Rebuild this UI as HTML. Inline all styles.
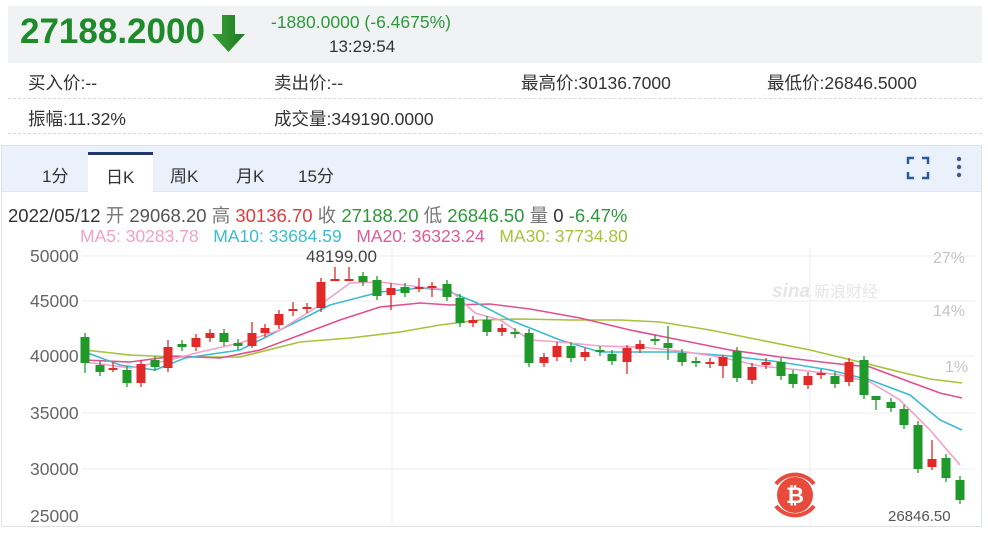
<!DOCTYPE html>
<html><head><meta charset="utf-8"><style>
*{margin:0;padding:0;box-sizing:border-box}
body{width:988px;height:541px;background:#fff;position:relative;overflow:hidden;font-family:"Liberation Sans","Noto Sans CJK SC",sans-serif}
.a{position:absolute;white-space:nowrap}
.top{position:absolute;left:8px;top:6px;width:974px;height:57px;background:#f1f2f4}
.sep{position:absolute;left:8px;width:974px;border-top:1px dashed #d8d8d8}
.lbl{font-size:17.5px;color:#333}
</style></head><body>
<div class="top"></div>
<div class="a" style="left:20px;top:12px;font-size:35px;font-weight:bold;color:#1f8a2a">27188.2000</div>
<svg class="a" style="left:211px;top:14px" width="36" height="40" viewBox="0 0 36 40"><defs><linearGradient id="g" x1="0" x2="1"><stop offset="0" stop-color="#3aa33a"/><stop offset="1" stop-color="#1d7a1d"/></linearGradient></defs><path d="M11 1H24V20H34L17.5 38L1 20H11Z" fill="url(#g)"/></svg>
<div class="a" style="left:271px;top:12px;font-size:17.5px;color:#2c9a3a">-1880.0000 (-6.4675%)</div>
<div class="a" style="left:329px;top:37px;font-size:17px;color:#333">13:29:54</div>
<div class="a lbl" style="left:28px;top:70px">买入价:--</div>
<div class="a lbl" style="left:274px;top:70px">卖出价:--</div>
<div class="a lbl" style="left:521px;top:70px">最高价:30136.7000</div>
<div class="a lbl" style="left:767px;top:70px">最低价:26846.5000</div>
<div class="sep" style="top:98px"></div>
<div class="a lbl" style="left:28px;top:106px">振幅:11.32%</div>
<div class="a lbl" style="left:274px;top:106px">成交量:349190.0000</div>
<div class="sep" style="top:133px"></div>
<div class="a" style="left:1px;top:145px;width:981px;height:382px;border:1px solid #dde3ea"></div>
<div class="a" style="left:2px;top:146px;width:979px;height:46px;background:#eaf1fa;border-bottom:1px solid #e0e6ee"></div>
<div class="a" style="left:88px;top:152px;width:65px;height:41px;background:#fff;border-top:3px solid #223a6a"></div>
<div class="a" style="left:42px;top:162px;font-size:17px;color:#333">1分</div>
<div class="a" style="left:106px;top:163px;font-size:17px;color:#333">日K</div>
<div class="a" style="left:170px;top:162px;font-size:17px;color:#333">周K</div>
<div class="a" style="left:236px;top:162px;font-size:17px;color:#333">月K</div>
<div class="a" style="left:298px;top:162px;font-size:17px;color:#333">15分</div>
<svg class="a" style="left:905px;top:155px" width="60" height="26"><g stroke="#2b5c9a" stroke-width="2.5" fill="none"><path d="M3 9V3H9M17 3H23V9M3 17V23H9M17 23H23V17"/></g><circle cx="54" cy="4" r="2.2" fill="#3a5a8a"/><circle cx="54" cy="12" r="2.2" fill="#3a5a8a"/><circle cx="54" cy="20" r="2.2" fill="#3a5a8a"/></svg>
<div class="a" style="left:8px;top:202px;font-size:18.5px;color:#333">2022/05/12 <span style="color:#777">开</span> <span style="color:#555">29068.20</span> <span style="color:#777">高</span> <span style="color:#e03c3c">30136.70</span> <span style="color:#777">收</span> <span style="color:#2c9a3a">27188.20</span> <span style="color:#777">低</span> <span style="color:#2c9a3a">26846.50</span> <span style="color:#777">量</span> 0 <span style="color:#2c9a3a">-6.47%</span></div>
<div class="a" style="left:80px;top:226px;font-size:17.5px"><span style="color:#f2a0c8">MA5: 30283.78</span>&nbsp;&nbsp;&nbsp;<span style="color:#3bbcd0">MA10: 33684.59</span>&nbsp;&nbsp;&nbsp;<span style="color:#e05a9a">MA20: 36323.24</span>&nbsp;&nbsp;&nbsp;<span style="color:#a8c23a">MA30: 37734.80</span></div>
<svg class="a" style="left:0;top:0" width="988" height="541">
<g stroke="#eceef0" stroke-width="1"><path d="M82 256H975M82 301H975M82 356H975M82 413H975M82 469H975M392 248V525M810 248V525"/></g>
<g font-size="17.5" fill="#666" font-family="Liberation Sans,sans-serif"><text x="30" y="262">50000</text><text x="30" y="307">45000</text><text x="30" y="362">40000</text><text x="30" y="419">35000</text><text x="30" y="475">30000</text><text x="30" y="522">25000</text></g>
<g font-size="16" fill="#c4c4c4" font-family="Liberation Sans,sans-serif"><text x="933" y="263">27%</text><text x="933" y="316">14%</text><text x="945" y="372">1%</text></g>
<text x="306" y="262" font-size="17" fill="#444" font-family="Liberation Sans,sans-serif">48199.00</text>
<text x="772" y="297" font-size="19" font-style="italic" font-weight="bold" fill="#e6e6e6" font-family="Liberation Sans,sans-serif">sina</text><text x="814" y="297" font-size="16" fill="#e6e6e6" font-family="Noto Sans CJK SC,sans-serif">新浪财经</text>
<g fill="none" stroke-width="1.6">
<polyline stroke="#a8c23a" points="85,350 130,355 175,357 240,357 300,342 350,338 400,332 440,325 480,320 520,319 570,320 620,320 660,322 710,330 760,340 810,350 860,362 900,372 930,379 962,383"/>
<polyline stroke="#e0508f" points="85,360 130,362 175,356 220,358 260,350 300,335 340,320 380,307 420,303 450,305 490,304 530,309 580,318 630,330 680,340 730,350 780,357 830,363 870,367 910,382 940,393 962,398"/>
<polyline stroke="#3bbcd0" points="85,352 120,365 155,370 185,358 240,350 280,330 330,305 380,292 420,288 445,290 475,302 510,320 560,340 600,352 640,352 680,352 730,356 780,362 830,370 870,380 910,395 940,420 962,430"/>
<polyline stroke="#f2a0c8" points="85,362 130,368 170,360 200,352 240,343 280,330 320,305 350,283 380,282 420,287 450,290 475,313 500,320 530,340 560,342 600,346 640,347 680,351 720,357 760,366 800,370 840,375 870,382 900,400 930,430 960,465"/>
</g>
<g id="c"></g>
<g>
<path d="M776 484A24 24 0 0 1 814 484M814 506A24 24 0 0 1 776 506" fill="none" stroke="#e84a3c" stroke-width="4"/>
<circle cx="795" cy="495" r="18" fill="#e84a3c"/>
<text x="795" y="503" text-anchor="middle" font-size="22" font-weight="bold" fill="#fff" font-family="Liberation Sans,sans-serif">₿</text>
</g>
<text x="888" y="521" font-size="15" fill="#555" font-family="Liberation Sans,sans-serif">26846.50</text>
</svg>
<script>
var d=[[85,337,363,'g',333,373],[100,365,372,'g'],[113,368,370,'r',362,372],[127,370,383,'g'],[141,364,383,'r'],[155,360,367,'g'],[168,347,368,'r',340,372],[182,344,347,'g'],[196,338,347,'r'],[210,333,338,'r'],[224,333,342,'g'],[238,343,346,'g'],[252,333,346,'r',322,348],[265,328,333,'r'],[279,314,325,'r'],[293,309,311,'r',302,316],[307,307,309,'r'],[321,282,308,'r'],[335,279,281,'r',267,281],[349,279,281,'r',267,281],[363,276,282,'g'],[377,280,296,'g'],[391,288,295,'r',283,310],[405,287,293,'g'],[419,287,289,'r',278,292],[432,286,288,'r',282,297],[447,284,297,'g'],[460,298,323,'g'],[473,320,323,'r'],[487,320,332,'g'],[502,328,332,'r'],[515,332,334,'g'],[529,333,363,'g'],[544,357,363,'r'],[557,346,357,'r'],[571,346,358,'g'],[585,352,357,'r'],[600,350,352,'g'],[612,354,361,'g'],[627,348,362,'r',345,374],[640,344,349,'r'],[655,339,341,'g'],[668,343,348,'g',326,360],[682,353,362,'g'],[696,361,363,'g'],[710,362,364,'r'],[723,357,366,'r',355,378],[737,351,378,'g'],[752,367,380,'r'],[766,362,365,'r'],[781,362,376,'g'],[793,374,384,'g'],[808,376,385,'r'],[821,373,375,'r'],[835,376,384,'g'],[849,362,382,'r'],[864,360,395,'g'],[876,396,400,'g',396,410],[891,402,408,'g'],[904,409,425,'g'],[918,425,469,'g'],[932,459,467,'r',440,470],[946,458,478,'g'],[960,480,500,'g']];
var s='';d.forEach(function(c){var col=c[3]=='g'?'#1f9a2a':'#e02a2a';var t=c[4]||c[1]-4,b=c[5]||c[2]+4;s+='<line x1="'+c[0]+'" x2="'+c[0]+'" y1="'+t+'" y2="'+b+'" stroke="'+col+'" stroke-width="1.3"/><rect x="'+(c[0]-4.5)+'" y="'+c[1]+'" width="9" height="'+Math.max(2,c[2]-c[1])+'" fill="'+col+'"/>'});
document.getElementById('c').innerHTML=s;
</script>
</body></html>
